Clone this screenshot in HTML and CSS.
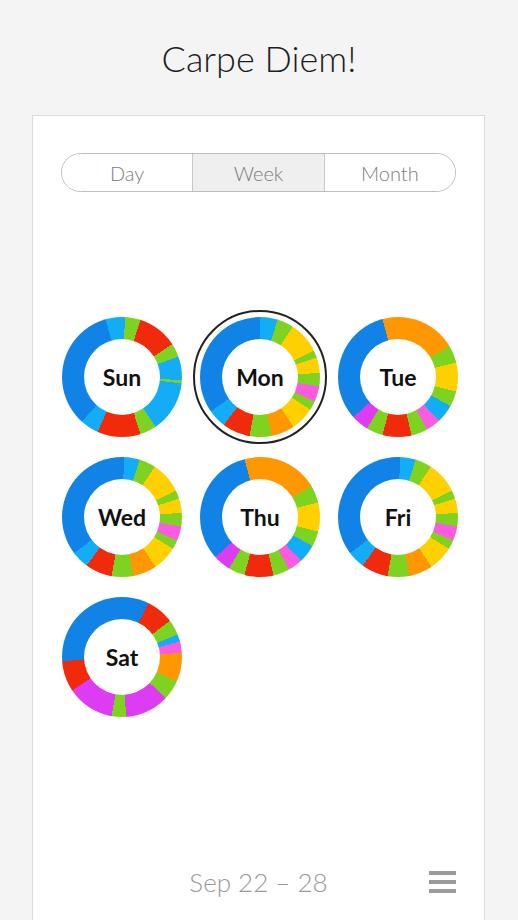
FILE: index.html
```html
<!DOCTYPE html>
<html>
<head>
  <link rel="stylesheet" href="styles.css">
</head>
<body>
  <h1 class="title">Carpe Diem!</h1>
  <div class="card">
    <div class="segmented">
      <button class="seg">Day</button>
      <button class="seg active">Week</button>
      <button class="seg">Month</button>
    </div>

    <div class="days">
      <div class="ring sun"><span>Sun</span></div>
      <div class="ring mon selected"><span>Mon</span></div>
      <div class="ring tue"><span>Tue</span></div>
      <div class="ring wed"><span>Wed</span></div>
      <div class="ring thu"><span>Thu</span></div>
      <div class="ring fri"><span>Fri</span></div>
      <div class="ring sat"><span>Sat</span></div>
    </div>

    <div class="footer">
      <span class="range">Sep 22 – 28</span>
      <span class="menu"><i></i><i></i><i></i></span>
    </div>
  </div>
</body>
</html>
```

FILE: styles.css
```css
body {
  margin: 0;
  padding: 0;
  background-color: #f4f4f4;
  font-family: Lato, "Liberation Sans", sans-serif;
}

.title {
  margin: 0;
  height: 115px;
  line-height: 116px;
  text-align: center;
  font-size: 36px;
  font-weight: 300;
  color: #1e1e1e;
}

.card {
  margin: 0 33px 0 32px;
  min-height: calc(100vh - 115px);
  box-sizing: border-box;
  background-color: #fff;
  border: 1px solid #dcdcdc;
  border-bottom: none;
  padding: 37px 28px 0 28px;
  display: flex;
  flex-direction: column;
}

.segmented {
  display: flex;
  height: 39px;
  border: 1px solid #bdbdbd;
  border-radius: 20px;
  overflow: hidden;
  box-sizing: border-box;
}

.seg {
  flex: 1;
  border: none;
  background: #fff;
  font-family: inherit;
  font-size: 20px;
  font-weight: 300;
  color: #7c7c7c;
  padding: 0;
  padding-top: 1px;
}

.seg + .seg {
  border-left: 1px solid #c8c8c8;
}

.seg.active {
  background-color: #efefef;
}

.days {
  margin-top: 125px;
  margin-left: 1px;
  display: grid;
  grid-template-columns: repeat(3, 120px);
  column-gap: 18px;
  row-gap: 20px;
}

.ring {
  position: relative;
  width: 120px;
  height: 120px;
  border-radius: 50%;
  display: flex;
  align-items: center;
  justify-content: center;
}

.ring::after {
  content: "";
  position: absolute;
  width: 76px;
  height: 76px;
  border-radius: 50%;
  background: #fff;
}

.ring span {
  position: relative;
  z-index: 1;
  font-size: 23px;
  font-weight: 700;
  color: #111;
  margin-top: -1px;
}

.ring.selected::before {
  content: "";
  position: absolute;
  top: -7px;
  left: -7px;
  right: -7px;
  bottom: -7px;
  border: 2px solid #222;
  border-radius: 50%;
}

.sun {
  background: conic-gradient(
    #13adf7 0deg 3deg, #7ed321 3deg 18deg, #f02a0a 18deg 57deg,
    #7ed321 57deg 70deg, #13adf7 70deg 93deg, #7ed321 93deg 96deg,
    #13adf7 96deg 146deg, #7ed321 146deg 162deg, #f02a0a 162deg 204deg,
    #13adf7 204deg 222deg, #1283e6 222deg 344deg, #13adf7 344deg 360deg);
}

.mon {
  background: conic-gradient(
    #13adf7 0deg 17deg, #7ed321 17deg 33deg, #ffd000 33deg 64deg,
    #7ed321 64deg 71deg, #ffd000 71deg 86deg, #7ed321 86deg 99deg,
    #fb5be0 99deg 114deg, #7ed321 114deg 123deg, #ffd000 123deg 146deg,
    #ff9800 146deg 169deg, #7ed321 169deg 190deg, #f02a0a 190deg 217deg,
    #13adf7 217deg 235deg, #1283e6 235deg 360deg);
}

.tue,
.thu {
  background: conic-gradient(
    #ff9800 0deg 59deg, #7ed321 59deg 76deg, #ffd000 76deg 104deg,
    #7ed321 104deg 119deg, #13adf7 119deg 137deg, #fb5be0 137deg 151deg,
    #7ed321 151deg 167deg, #f02a0a 167deg 195deg, #7ed321 195deg 211deg,
    #dd3cf2 211deg 228deg, #1283e6 228deg 345deg, #ff9800 345deg 360deg);
}

.wed,
.fri {
  background: conic-gradient(
    #1283e6 0deg 2deg, #13adf7 2deg 17deg, #7ed321 17deg 33deg,
    #ffd000 33deg 64deg, #7ed321 64deg 72deg, #ffd000 72deg 86deg,
    #7ed321 86deg 99deg, #fb5be0 99deg 113deg, #7ed321 113deg 122deg,
    #ffd000 122deg 146deg, #ff9800 146deg 169deg, #7ed321 169deg 190deg,
    #f02a0a 190deg 216deg, #13adf7 216deg 233deg, #1283e6 233deg 360deg);
}

.sat {
  background: conic-gradient(
    #1283e6 0deg 26deg, #f02a0a 26deg 53deg, #7ed321 53deg 68deg,
    #13adf7 68deg 75deg, #fb5be0 75deg 86deg, #ff9800 86deg 114deg,
    #7ed321 114deg 133deg, #dd3cf2 133deg 176deg, #7ed321 176deg 190deg,
    #dd3cf2 190deg 236deg, #f02a0a 236deg 266deg, #1283e6 266deg 360deg);
}

.footer {
  margin-top: auto;
  height: 40px;
  margin-bottom: 18px;
  position: relative;
  display: flex;
  align-items: center;
  justify-content: center;
}

.range {
  font-size: 26px;
  font-weight: 300;
  color: #999;
}

.menu {
  position: absolute;
  right: 0;
  top: 9px;
  width: 27px;
  display: flex;
  flex-direction: column;
  gap: 5px;
}

.menu i {
  display: block;
  height: 4px;
  background: #9a9a9a;
}
```
